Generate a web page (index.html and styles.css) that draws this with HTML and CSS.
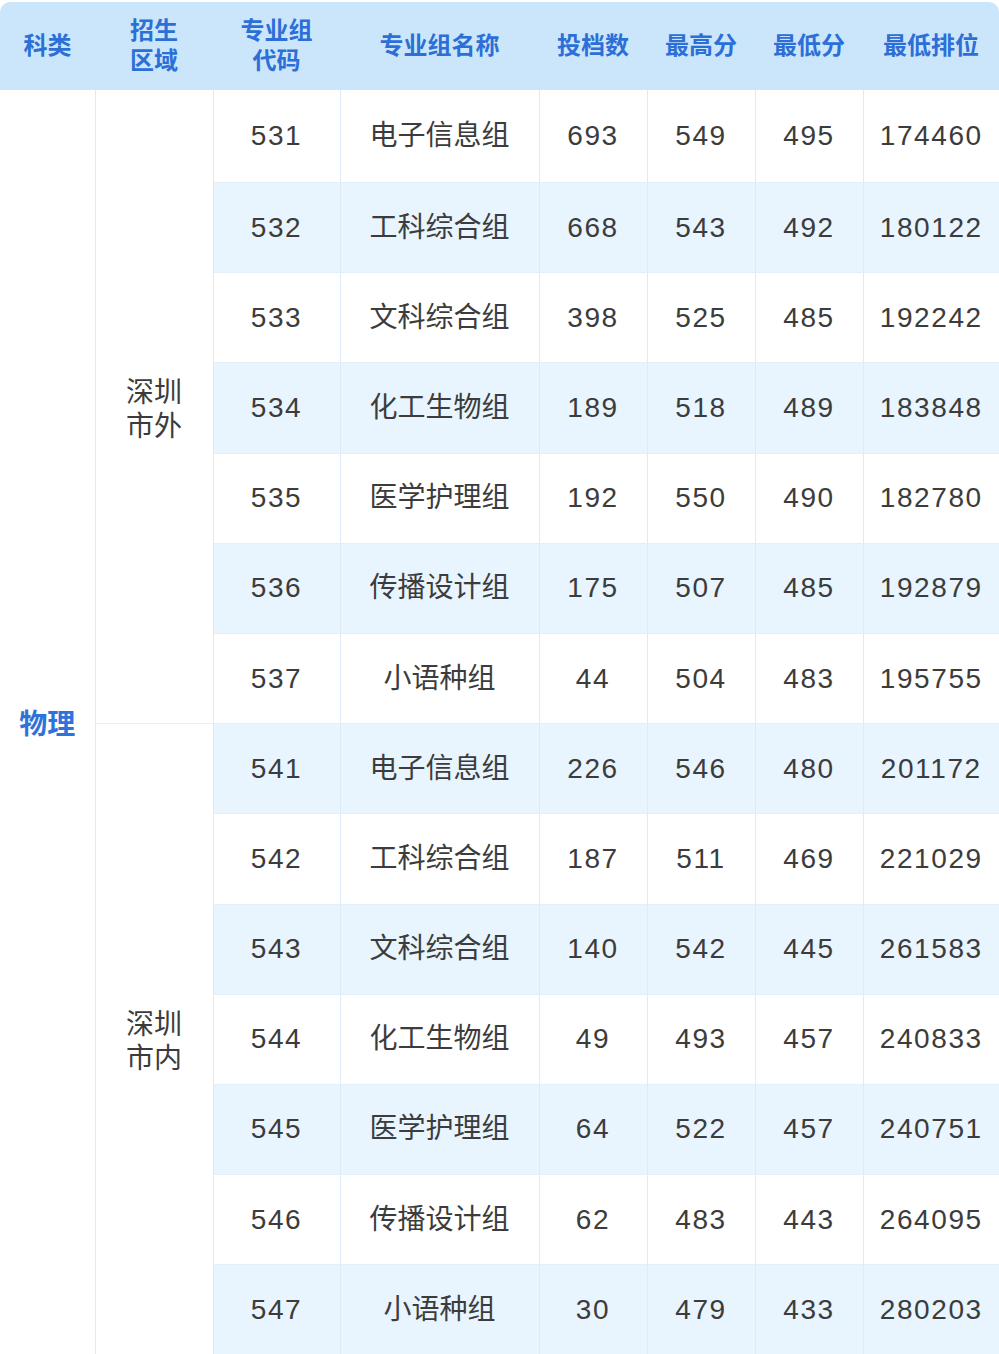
FILE: index.html
```html
<!DOCTYPE html>
<html lang="zh-CN">
<head>
<meta charset="utf-8">
<link rel="stylesheet" href="styles.css">
<title>投档情况</title>
</head>
<body>
<table class="score-table">
  <colgroup>
    <col class="c1"><col class="c2"><col class="c3"><col class="c4"><col class="c5"><col class="c6"><col class="c7"><col class="c8">
  </colgroup>
  <thead>
    <tr class="head">
      <th class="first">科类</th>
      <th><span class="line">招生</span><span class="line">区域</span></th>
      <th><span class="line">专业组</span><span class="line">代码</span></th>
      <th>专业组名称</th>
      <th>投档数</th>
      <th>最高分</th>
      <th>最低分</th>
      <th class="last">最低排位</th>
    </tr>
  </thead>
  <tbody>
    <tr class="top"><td class="subject" rowspan="14">物理</td><td class="region" rowspan="7"><span class="line">深圳</span><span class="line">市外</span></td><td>531</td><td class="name">电子信息组</td><td>693</td><td>549</td><td>495</td><td>174460</td></tr>
    <tr class="alt"><td>532</td><td class="name">工科综合组</td><td>668</td><td>543</td><td>492</td><td>180122</td></tr>
    <tr><td>533</td><td class="name">文科综合组</td><td>398</td><td>525</td><td>485</td><td>192242</td></tr>
    <tr class="alt"><td>534</td><td class="name">化工生物组</td><td>189</td><td>518</td><td>489</td><td>183848</td></tr>
    <tr><td>535</td><td class="name">医学护理组</td><td>192</td><td>550</td><td>490</td><td>182780</td></tr>
    <tr class="alt"><td>536</td><td class="name">传播设计组</td><td>175</td><td>507</td><td>485</td><td>192879</td></tr>
    <tr><td>537</td><td class="name">小语种组</td><td>44</td><td>504</td><td>483</td><td>195755</td></tr>
    <tr class="alt"><td class="region" rowspan="7"><span class="line">深圳</span><span class="line">市内</span></td><td>541</td><td class="name">电子信息组</td><td>226</td><td>546</td><td>480</td><td>201172</td></tr>
    <tr><td>542</td><td class="name">工科综合组</td><td>187</td><td>511</td><td>469</td><td>221029</td></tr>
    <tr class="alt"><td>543</td><td class="name">文科综合组</td><td>140</td><td>542</td><td>445</td><td>261583</td></tr>
    <tr><td>544</td><td class="name">化工生物组</td><td>49</td><td>493</td><td>457</td><td>240833</td></tr>
    <tr class="alt"><td>545</td><td class="name">医学护理组</td><td>64</td><td>522</td><td>457</td><td>240751</td></tr>
    <tr><td>546</td><td class="name">传播设计组</td><td>62</td><td>483</td><td>443</td><td>264095</td></tr>
    <tr class="alt"><td>547</td><td class="name">小语种组</td><td>30</td><td>479</td><td>433</td><td>280203</td></tr>
  </tbody>
</table>
</body>
</html>
```
FILE: styles.css
```css
html, body {
  margin: 0;
  padding: 0;
  background: #ffffff;
}
body {
  padding-top: 2px;
  font-family: "Liberation Sans", "Noto Sans CJK SC", sans-serif;
}
.score-table {
  width: 999px;
  table-layout: fixed;
  border-collapse: collapse;
  border-spacing: 0;
}
.c1 { width: 95px; }
.c2 { width: 118px; }
.c3 { width: 127px; }
.c4 { width: 199px; }
.c5 { width: 108px; }
.c6 { width: 108px; }
.c7 { width: 108px; }
.c8 { width: 136px; }

.line {
  display: block;
}

.head th {
  height: 88px;
  padding: 0 0 4px 0;
  box-sizing: border-box;
  background: #cbe6fb;
  color: #2b6fd7;
  font-family: "Noto Sans CJK SC", sans-serif;
  font-weight: 700;
  font-size: 24px;
  line-height: 30px;
  text-align: center;
  vertical-align: middle;
}
.head th.first { border-top-left-radius: 10px; }
.head th.last { border-top-right-radius: 10px; }

tbody tr { height: 90.2px; }
tbody tr.top { height: 92.5px; }
tbody td {
  padding: 0;
  border: 1px solid #dcebf7;
  border-top: 0;
  color: #3c3c3c;
  font-size: 28px;
  line-height: 34px;
  letter-spacing: 1.6px;
  text-align: center;
  vertical-align: middle;
  font-family: "Liberation Sans", "Noto Sans CJK SC", sans-serif;
}
tbody tr td { border-bottom: 1px solid #e4f0f9; }
tbody tr.alt td { background: #e8f4fe; }
tbody td.name {
  letter-spacing: 0;
}
tbody td.subject {
  background: #ffffff;
  border-left: 0;
  border-bottom: 0;
  color: #2f72da;
  font-family: "Noto Sans CJK SC", sans-serif;
  font-weight: 700;
  letter-spacing: 0;
}
tbody tr.alt td.region,
tbody td.region {
  background: #ffffff;
  font-family: "Noto Sans CJK SC", sans-serif;
  letter-spacing: 0;
}
tbody tr td:last-child { border-right: 0; }
```
